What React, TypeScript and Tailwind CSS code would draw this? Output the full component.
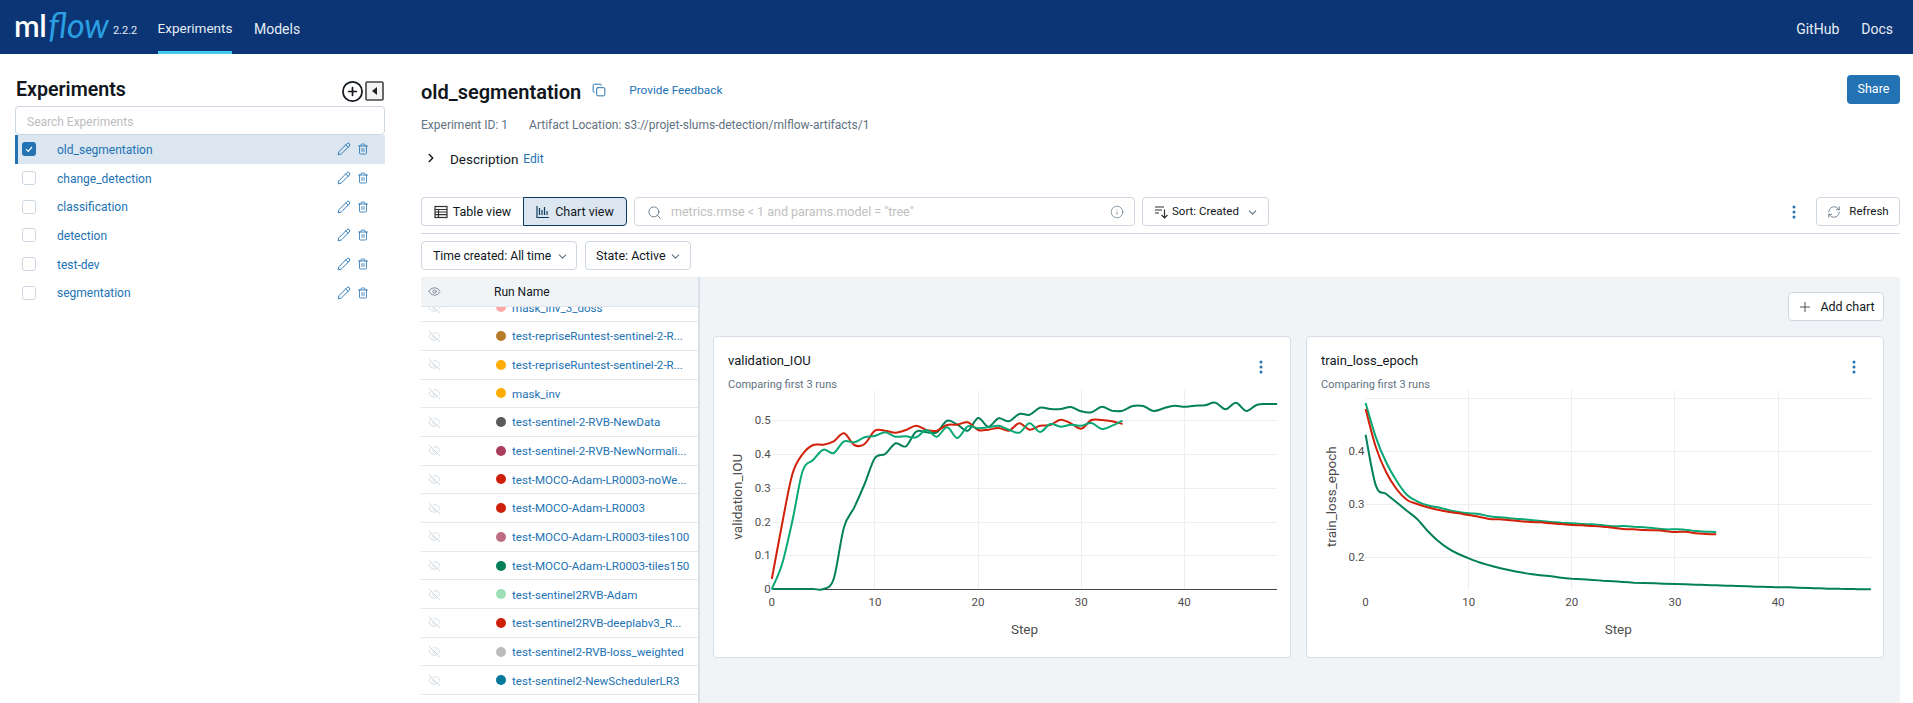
import React from 'react'
import { ChevronDown, ChevronRight, CirclePlus, Copy, Eye, EyeOff, Info, Pencil, Plus, RefreshCw, Search, Trash2 } from 'lucide-react'

const experiments = ['old_segmentation', 'change_detection', 'classification', 'detection', 'test-dev', 'segmentation']

const runs = [
  { name: 'mask_inv_3_doss', color: 'bg-[#ffa6a6]' },
  { name: 'test-repriseRuntest-sentinel-2-R...', color: 'bg-[#b67c2c]' },
  { name: 'test-repriseRuntest-sentinel-2-R...', color: 'bg-[#ffab00]' },
  { name: 'mask_inv', color: 'bg-[#ffab00]' },
  { name: 'test-sentinel-2-RVB-NewData', color: 'bg-[#5a5a5a]' },
  { name: 'test-sentinel-2-RVB-NewNormali...', color: 'bg-[#aa3e5c]' },
  { name: 'test-MOCO-Adam-LR0003-noWe...', color: 'bg-[#ce1f0a]' },
  { name: 'test-MOCO-Adam-LR0003', color: 'bg-[#ce1f0a]' },
  { name: 'test-MOCO-Adam-LR0003-tiles100', color: 'bg-[#bd6d83]' },
  { name: 'test-MOCO-Adam-LR0003-tiles150', color: 'bg-[#02805a]' },
  { name: 'test-sentinel2RVB-Adam', color: 'bg-[#9adfb5]' },
  { name: 'test-sentinel2RVB-deeplabv3_R...', color: 'bg-[#ce1f0a]' },
  { name: 'test-sentinel2-RVB-loss_weighted', color: 'bg-[#bbbbbb]' },
  { name: 'test-sentinel2-NewSchedulerLR3', color: 'bg-[#06789b]' },
]

const RED = '#d2210a'
const LIGHT = '#07a876'
const DARK = '#03805a'

// y values read off the 3x crop, x is always step * 26.95 in the same crop
const iouRed = [745, 580, 430, 370, 343, 342, 332, 308, 343, 340, 300, 300, 306, 298, 285, 298, 300, 283, 282, 275, 298, 297, 292, 300, 278, 297, 285, 283, 267, 278, 294, 268, 268, 272, 280]
const iouLight = [775, 700, 570, 420, 388, 357, 367, 332, 335, 320, 316, 305, 318, 317, 320, 298, 318, 290, 322, 287, 293, 290, 285, 297, 306, 278, 304, 280, 288, 282, 285, 277, 295, 285, 270]
const iouDark = [775, 775, 775, 775, 775, 775, 745, 590, 530, 460, 382, 370, 338, 347, 303, 305, 305, 270, 282, 300, 262, 288, 263, 272, 250, 252, 231, 235, 235, 229, 242, 245, 228, 240, 240, 226, 226, 241, 233, 225, 228, 225, 224, 216, 236, 216, 241, 223, 220, 220]

const lossLight = [217, 320, 395, 450, 492, 512, 524, 530, 538, 544, 548, 550, 557, 560, 563, 565, 568, 571, 574, 576, 578, 580, 581, 584, 587, 586, 588, 590, 593, 596, 596, 597, 601, 603, 604]
const lossRed = [235, 350, 425, 475, 507, 520, 530, 537, 543, 548, 553, 558, 565, 566, 569, 572, 574, 575, 578, 580, 583, 584, 586, 588, 591, 595, 596, 598, 599, 601, 604, 603, 608, 610, 611]
const lossDark = [312, 465, 490, 515, 540, 565, 600, 630, 653, 670, 683, 695, 704, 712, 719, 725, 730, 734, 737, 741, 744, 746, 748, 750, 752, 754, 756, 757, 758, 759, 760, 761, 762, 763, 764, 765, 766, 767, 768, 769, 770, 770, 771, 772, 773, 774, 774, 775, 776, 776]

const toSpline = (ys: number[], originX: number) => {
  const pts = ys.map((zy, i) => [(originX + i * 26.95) / 2.613, (zy - 16) / 3 - 54])
  let d = `M${pts[0][0].toFixed(1)} ${pts[0][1].toFixed(1)}`
  for (let i = 0; i < pts.length - 1; i++) {
    const p0 = pts[Math.max(i - 1, 0)]
    const p1 = pts[i]
    const p2 = pts[i + 1]
    const p3 = pts[Math.min(i + 2, pts.length - 1)]
    const c1x = p1[0] + (p2[0] - p0[0]) / 6
    const c1y = p1[1] + (p2[1] - p0[1]) / 6
    const c2x = p2[0] - (p3[0] - p1[0]) / 6
    const c2y = p2[1] - (p3[1] - p1[1]) / 6
    d += `C${c1x.toFixed(1)} ${c1y.toFixed(1)} ${c2x.toFixed(1)} ${c2y.toFixed(1)} ${p2[0].toFixed(1)} ${p2[1].toFixed(1)}`
  }
  return d
}

const Dots = () => (
  <svg width="4" height="14" viewBox="0 0 4 14" className="shrink-0 text-[#2272b4]">
    <circle cx="2" cy="2" r="1.5" fill="currentColor" />
    <circle cx="2" cy="7" r="1.5" fill="currentColor" />
    <circle cx="2" cy="12" r="1.5" fill="currentColor" />
  </svg>
)

type ChartProps = {
  title: string
  originX: number
  axisY: number | null
  yTicks: { label: string; zy: number }[]
  series: { ys: number[]; color: string }[]
}

const ChartCard = ({ title, originX, axisY, yTicks, series }: ChartProps) => {
  const stepX = (s: number) => (originX + s * 26.95) / 2.613
  const zy = (v: number) => (v - 16) / 3 - 54
  const right = stepX(49)

  return (
    <div className="h-[322px] bg-white border border-[#d5dee7] rounded-[4px] overflow-hidden">
      <div className="h-[53px] pl-[14px] pr-[27px] pt-[15px] flex justify-between">
        <div>
          <div className="text-[13px] leading-[18px] text-[#11171c]">{title}</div>
          <div className="text-[11px] leading-[14px] mt-[8px] text-[#5f7281]">Comparing first 3 runs</div>
        </div>
        <div className="pt-[8px]">
          <Dots />
        </div>
      </div>
      <svg viewBox="0 0 577 266" className="block w-[577px] h-[266px]">
        {[0, 10, 20, 30, 40].map((s) => (
          <g key={s}>
            <line x1={stepX(s)} x2={stepX(s)} y1={0} y2={(775 - 16) / 3 - 54} stroke="#eeeeee" strokeWidth="1" shapeRendering="crispEdges" className={s === 0 ? 'hidden' : ''} />
            <text x={stepX(s)} y={216} textAnchor="middle" fontSize="11.5" fill="#4e4e4e">{s}</text>
          </g>
        ))}
        {yTicks.map((t) => (
          <g key={t.label}>
            <line x1={stepX(0)} x2={right} y1={zy(t.zy)} y2={zy(t.zy)} stroke="#eeeeee" strokeWidth="1" shapeRendering="crispEdges" />
            <text x={stepX(0) - 1} y={zy(t.zy) + 4} textAnchor="end" fontSize="11.5" fill="#4e4e4e">{t.label}</text>
          </g>
        ))}
        {axisY !== null && <line x1={stepX(0)} x2={right} y1={zy(axisY)} y2={zy(axisY)} stroke="#444444" strokeWidth="1" shapeRendering="crispEdges" />}
        {series.map((s) => (
          <path key={s.color} d={toSpline(s.ys, originX)} fill="none" stroke={s.color} strokeWidth="2" />
        ))}
        <text x={(stepX(0) + right) / 2} y={244} textAnchor="middle" fontSize="13.5" fill="#4e4e4e">Step</text>
        <text transform={`translate(${stepX(0) - 30} ${zy(498)}) rotate(-90)`} textAnchor="middle" fontSize="13.5" fill="#4e4e4e">{title}</text>
      </svg>
    </div>
  )
}

const ToolButton = ({ children, className }: { children: React.ReactNode; className: string }) => (
  <div className={`h-[29px] pt-[1px] flex items-center border rounded-[4px] whitespace-nowrap text-[#11171c] ${className}`}>
    {children}
  </div>
)

export default function App() {
  return (
    <div className="w-[1913px] h-[703px] overflow-hidden bg-white flex flex-col font-['Roboto',sans-serif]">
      {/* top bar */}
      <header className="h-[54px] shrink-0 bg-[#0b3574] flex items-stretch pl-[14px] pr-[20px] text-white">
        <div className="w-[144px] flex items-center">
          <span className="text-[31px] leading-none font-semibold tracking-[-0.5px] font-['Lato',sans-serif] pb-[4px]">ml</span>
          <span className="text-[34px] leading-none italic text-[#2a9fe2] font-['Lato',sans-serif] font-normal pb-[4px] pl-[2px]">flow</span>
          <span className="text-[11px] ml-[4px] pt-[9px] text-[#e6edf5]">2.2.2</span>
        </div>
        <div className="h-full w-[74px] flex items-center justify-center text-[13.5px] border-b-[3px] border-[#43caed] pt-[6px] text-[#e6edf5] whitespace-nowrap">Experiments</div>
        <div className="h-full ml-[22px] pt-[4px] flex items-center text-[14px] text-[#e6edf5]">Models</div>
        <div className="ml-auto pt-[4px] flex items-center gap-[22px] text-[14px] text-[#e6edf5]">
          <span>GitHub</span>
          <span>Docs</span>
        </div>
      </header>

      <div className="flex-1 flex min-h-0">
        {/* experiment list */}
        <aside className="w-[421px] shrink-0 pl-[15px] pr-[36px] pt-[21px]">
          <div className="h-[32px] flex items-center justify-between pr-[1px]">
            <h1 className="pl-[1px] pb-[2px] text-[19.6px] font-semibold text-[#11171c]">Experiments</h1>
            <div className="flex items-center gap-[1px]">
              <CirclePlus size={23} strokeWidth={1.8} className="text-[#11171c]" />
              <svg width="19" height="20" viewBox="0 0 19 20">
                <rect x="1" y="1" width="17" height="18" rx="1" fill="#f4f4f4" stroke="#444444" strokeWidth="1.6" />
                <path d="M12 6v8l-5-4z" fill="#222222" />
              </svg>
            </div>
          </div>
          <div className="h-[29px] border border-[#cdd7e1] rounded-[4px] mt-[-1px] flex items-center pl-[11px] pt-[3px] text-[12px] text-[#bdbdbd]">Search Experiments</div>
          <div>
            {experiments.map((name, i) => (
              <div
                key={name}
                className={`h-[28.7px] flex items-center ${i === 0 ? 'bg-[#dbe6f1] border-l-[3px] border-[#2272b4] pl-[4px]' : 'pl-[7px]'}`}
              >
                {i === 0 ? (
                  <div className="w-[14px] h-[14px] rounded-[3px] bg-[#2272b4] flex items-center justify-center">
                    <svg width="10" height="10" viewBox="0 0 10 10"><path d="M2 5.2l2.2 2.2L8 3" fill="none" stroke="#ffffff" strokeWidth="1.2" /></svg>
                  </div>
                ) : (
                  <div className="w-[14px] h-[14px] rounded-[3px] border border-[#cdd7e1] bg-white" />
                )}
                <span className="ml-[21px] pt-[1px] flex-1 text-[12px] text-[#2272b4]">{name}</span>
                <Pencil size={14} strokeWidth={1.6} className="text-[#2272b4]" />
                <Trash2 size={12} strokeWidth={1.6} className="text-[#2272b4] ml-[6px] mr-[16px]" />
              </div>
            ))}
          </div>
        </aside>

        {/* main */}
        <main className="flex-1 min-w-0 pr-[13px] pt-[21px] flex flex-col">
          <div className="h-[29px] flex items-center">
            <h2 className="text-[20px] pt-[4px] font-semibold text-[#11171c]">old_segmentation</h2>
            <Copy size={14} strokeWidth={1.7} className="text-[#2272b4] ml-[11px] mt-[1px]" />
            <span className="ml-[23px] pt-[3px] text-[11.8px] text-[#2272b4]">Provide Feedback</span>
            <div className="ml-auto h-[29px] w-[53px] bg-[#2272b4] rounded-[4px] flex items-center justify-center text-[12.5px] text-white">Share</div>
          </div>
          <div className="mt-[10px] pt-[1px] h-[20px] flex items-center text-[12px] text-[#5f7281]">
            <span>Experiment ID: 1</span>
            <span className="ml-[21px]">Artifact Location: s3://projet-slums-detection/mlflow-artifacts/1</span>
          </div>
          <div className="mt-[14px] h-[20px] flex items-center">
            <ChevronRight size={14} strokeWidth={2.5} className="text-[#11171c] ml-[3px]" />
            <span className="ml-[12px] pt-[2px] text-[13.5px] text-[#11171c]">Description</span>
            <span className="ml-[5px] pt-[2px] text-[12px] text-[#2272b4]">Edit</span>
          </div>

          <div className="mt-[29px] flex items-center pb-[7px] border-b border-[#cdd7e1]">
            <ToolButton className="w-[102px] justify-center gap-[5px] rounded-r-none border-r-0 border-[#cdd7e1] bg-white text-[12.5px]">
              <svg width="14" height="14" viewBox="0 0 14 14" fill="none" stroke="#333333" strokeWidth="1.2">
                <rect x="1" y="1.5" width="12" height="11" />
                <path d="M1 4.5h12M1 7h12M1 9.7h12M4.5 4.5v8" />
              </svg>
              Table view
            </ToolButton>
            <ToolButton className="w-[104px] justify-center gap-[5px] rounded-l-none bg-[#dbe6f1] border-[#0e3a5e] text-[12.5px]">
              <svg width="14" height="14" viewBox="0 0 14 14" fill="none" stroke="#0e3a5e" strokeWidth="1.2">
                <path d="M1 1v11.5h12M3.5 10V3M6 10V5M8.5 10V2M11 10V6" />
              </svg>
              Chart view
            </ToolButton>
            <ToolButton className="w-[501px] ml-[7px] pl-[12px] pr-[10px] border-[#cdd7e1] bg-white text-[12.5px]">
              <Search size={15} strokeWidth={1.4} className="text-[#5f7281]" />
              <span className="ml-[9px] flex-1 text-[#c0c0c0]">metrics.rmse &lt; 1 and params.model = "tree"</span>
              <Info size={14} strokeWidth={1.2} className="text-[#5f7281]" />
            </ToolButton>
            <ToolButton className="w-[127px] ml-[7px] pl-[11px] pr-[9px] border-[#cdd7e1] bg-white text-[11.5px]">
              <svg width="15" height="14" viewBox="0 0 15 14" fill="none" stroke="#333333" strokeWidth="1.2">
                <path d="M1 2h9M1 5h7M1 8h4M10.5 4.5V13M7.5 10l3 3 3-3" />
              </svg>
              <span className="ml-[3px] flex-1">Sort: Created</span>
              <ChevronDown size={13} className="text-[#5f7281]" />
            </ToolButton>
            <div className="ml-auto mr-[20px]"><Dots /></div>
            <ToolButton className="w-[84px] justify-center gap-[8px] border-[#cdd7e1] bg-white text-[11.5px]">
              <RefreshCw size={14} strokeWidth={1.4} className="text-[#5f7281]" />
              Refresh
            </ToolButton>
          </div>

          <div className="mt-[7px] flex gap-[8px]">
            <ToolButton className="w-[156px] pl-[11px] pr-[7px] justify-between border-[#cdd7e1] bg-white text-[12.2px]">
              Time created: All time
              <ChevronDown size={13} className="text-[#5f7281]" />
            </ToolButton>
            <ToolButton className="w-[106px] pl-[10px] pr-[8px] justify-between border-[#cdd7e1] bg-white text-[12.5px]">
              State: Active
              <ChevronDown size={13} className="text-[#5f7281]" />
            </ToolButton>
          </div>

          <div className="mt-[7px] flex-1 min-h-0 flex">
            {/* runs table */}
            <div className="w-[279px] shrink-0 border-r-2 border-[#d9e0e7] flex flex-col">
              <div className="h-[30px] shrink-0 bg-[#f1f4f7] border-b border-[#dfe5eb] flex items-center">
                <Eye size={13} strokeWidth={1.4} className="text-[#5f7281] ml-[7px]" />
                <span className="ml-[53px] text-[12px] text-[#11171c]">Run Name</span>
              </div>
              <div className="flex-1 min-h-0 overflow-hidden">
                <div className="mt-[-13.5px]">
                  {runs.map((run, i) => (
                    <div key={i} className="h-[28.7px] flex items-center border-b border-[#e4e9ee]">
                      <EyeOff size={13} strokeWidth={1.4} className="text-[#c3cfd9] ml-[7px] shrink-0" />
                      <div className={`w-[10px] h-[10px] rounded-full ml-[55px] shrink-0 ${run.color}`} />
                      <span className="ml-[6px] pt-[2px] text-[11.6px] whitespace-nowrap text-[#2272b4]">{run.name}</span>
                    </div>
                  ))}
                </div>
              </div>
            </div>

            {/* chart area */}
            <div className="flex-1 min-w-0 bg-[#f1f4f7] pl-[13px] pr-[16px]">
              <div className="pt-[15px] flex justify-end">
                <ToolButton className="w-[96px] h-[28px] justify-center gap-[7px] border-[#cdd7e1] bg-white text-[12.5px]">
                  <Plus size={16} strokeWidth={1.3} className="text-[#333333]" />
                  Add chart
                </ToolButton>
              </div>
              <div className="mt-[15px] grid grid-cols-2 gap-[15px]">
                <ChartCard
                  title="validation_IOU"
                  originX={151}
                  axisY={775}
                  yTicks={[
                    { label: '0', zy: 775 },
                    { label: '0.1', zy: 673 },
                    { label: '0.2', zy: 575 },
                    { label: '0.3', zy: 472 },
                    { label: '0.4', zy: 370 },
                    { label: '0.5', zy: 268 },
                  ]}
                  series={[
                    { ys: iouDark, color: DARK },
                    { ys: iouRed, color: RED },
                    { ys: iouLight, color: LIGHT },
                  ]}
                />
                <ChartCard
                  title="train_loss_epoch"
                  originX={153}
                  axisY={null}
                  yTicks={[
                    { label: '0.2', zy: 679 },
                    { label: '0.3', zy: 520 },
                    { label: '0.4', zy: 361 },
                    { label: '', zy: 202 },
                  ]}
                  series={[
                    { ys: lossLight, color: LIGHT },
                    { ys: lossRed, color: RED },
                    { ys: lossDark, color: DARK },
                  ]}
                />
              </div>
            </div>
          </div>
        </main>
      </div>
    </div>
  )
}
